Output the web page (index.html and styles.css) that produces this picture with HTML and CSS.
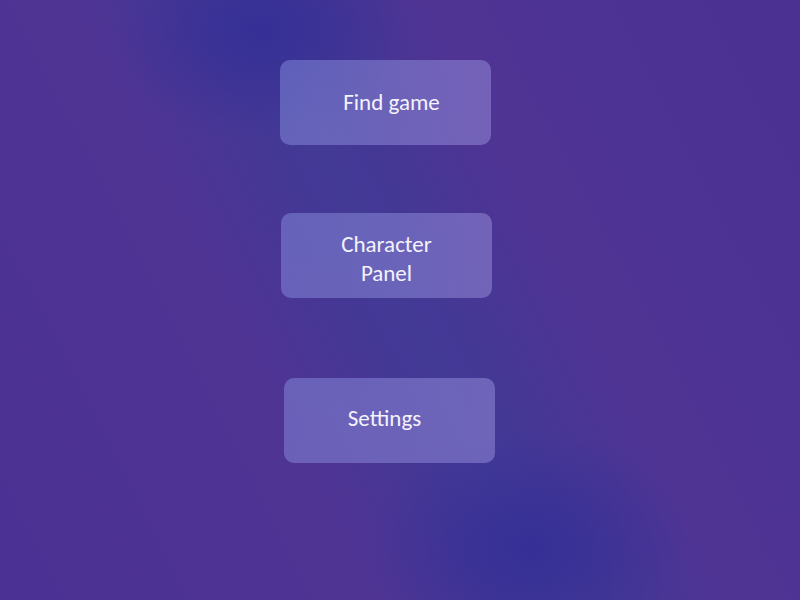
FILE: index.html
```html
<!DOCTYPE html>
<html>
<head>
<meta charset="utf-8">
<link rel="stylesheet" href="styles.css">
</head>
<body>
<main class="menu">
  <button class="menu-btn btn-find"><span>Find game</span></button>
  <button class="menu-btn btn-char"><span>Character<br>Panel</span></button>
  <button class="menu-btn btn-settings"><span>Settings</span></button>
</main>
</body>
</html>
```
FILE: styles.css
```css
html, body {
  margin: 0;
  height: 100%;
}
body {
  width: 800px;
  height: 600px;
  overflow: hidden;
  font-family: Carlito, Calibri, Lato, "Open Sans", sans-serif;
  background:
    radial-gradient(ellipse 150px 110px at 262px 30px, rgba(52,46,150,0.9), rgba(52,46,150,0) 100%),
    radial-gradient(ellipse 160px 120px at 530px 548px, rgba(52,46,150,0.9), rgba(52,46,150,0) 100%),
    linear-gradient(63deg, #4b3193 0%, #4f3494 34%, #443895 46%, #433a96 50%, #443895 54%, #4f3494 66%, #4a3192 100%);
}
.menu {
  display: flex;
  flex-direction: column;
  align-items: flex-start;
  padding: 60px 0 0 280px;
}
.menu-btn {
  width: 211px;
  height: 85px;
  border: none;
  border-radius: 10px;
  background: linear-gradient(100deg, rgba(140,150,230,0.45), rgba(160,150,225,0.47));
  color: #f4f2fb;
  font-family: inherit;
  font-size: 23px;
  line-height: 29px;
  padding: 0;
  display: flex;
  align-items: center;
  justify-content: center;
  text-align: center;
}
.btn-find span { margin-left: 12px; }
.btn-char { margin-top: 68px; margin-left: 1px; }
.btn-char span { padding-top: 6px; }
.btn-settings { margin-top: 80px; margin-left: 4px; }
.btn-settings span { margin-right: 10px; margin-top: -5px; }
```
